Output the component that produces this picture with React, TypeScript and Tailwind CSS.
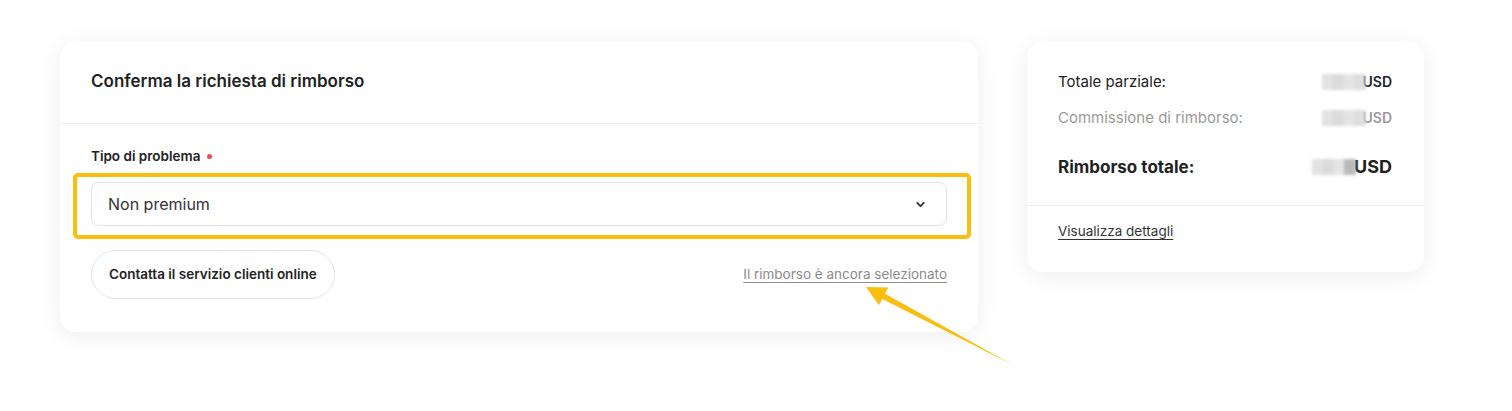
import { ChevronDown } from 'lucide-react';

function Blurred({ dark }: { dark?: boolean }) {
  return (
    <span className="flex items-center blur-[1.5px] opacity-80">
      <span className="w-[10px] h-[16px] bg-[#dcdcdc]" />
      <span className="w-[12px] h-[16px] bg-[#d3d3d3]" />
      <span className="w-[10px] h-[16px] bg-[#dedede]" />
      <span className={`w-[12px] h-[16px] ${dark ? 'bg-[#a9a9ab]' : 'bg-[#d6d6d6]'}`} />
    </span>
  );
}

function SummaryRow({ label, muted }: { label: string; muted?: boolean }) {
  return (
    <div className={`flex items-center justify-between text-[15px] leading-[20px] ${muted ? 'text-[#9a9a9a]' : 'text-[#222]'}`}>
      <span>{label}</span>
      <span className="flex items-center font-semibold text-[14px]">
        <Blurred />
        <span className="-ml-[4px]">USD</span>
      </span>
    </div>
  );
}

export default function App() {
  return (
    <div className="relative w-[1512px] h-[411px] bg-white font-['Inter',sans-serif]">
      <div className="flex items-start gap-[49px] pl-[60px] pt-[41px]">
        <div className="w-[918px] rounded-[16px] bg-white shadow-[0_4px_24px_rgba(0,0,0,0.07)]">
          <div className="h-[83px] flex items-center px-[31px] border-b border-[#eeeeee]">
            <h2 className="text-[17px] font-semibold text-[#222]">Conferma la richiesta di rimborso</h2>
          </div>
          <div className="px-[31px] pt-[24px] pb-[33px]">
            <div className="flex items-center gap-[7px] text-[13.5px] leading-[17px] font-semibold text-[#222]">
              Tipo di problema
              <span className="w-[5px] h-[5px] rounded-full bg-[#e94b4b]" />
            </div>
            <div className="relative mt-[17px]">
              <div className="h-[44px] flex items-center justify-between pl-[16px] pr-[19px] rounded-[8px] border border-[#e3e3e3] text-[16px] text-[#333]">
                <span>Non premium</span>
                <ChevronDown size={13} strokeWidth={3.5} className="text-[#333]" />
              </div>
              <div className="absolute -left-[18px] -right-[24px] -top-[9px] -bottom-[13px] border-[4px] border-[#fbbe0f] rounded-[5px] pointer-events-none" />
            </div>
            <div className="flex items-center justify-between mt-[24px]">
              <button className="h-[49px] px-[17px] rounded-full border border-[#e3e3e3] text-[13.5px] font-semibold text-[#222]">
                Contatta il servizio clienti online
              </button>
              <a className="text-[13.5px] text-[#8c8c8c] underline underline-offset-[3px]">Il rimborso è ancora selezionato</a>
            </div>
          </div>
        </div>

        <div className="w-[397px] rounded-[16px] bg-white shadow-[0_4px_24px_rgba(0,0,0,0.07)]">
          <div className="px-[31px] pt-[31px] pb-[26px] border-b border-[#eeeeee] pr-[32px]">
            <SummaryRow label="Totale parziale:" />
            <div className="mt-[16px]">
              <SummaryRow label="Commissione di rimborso:" muted />
            </div>
            <div className="mt-[27px] flex items-center justify-between text-[17px] leading-[24px] font-bold text-[#222]">
              <span>Rimborso totale:</span>
              <span className="flex items-center text-[18px]">
                <Blurred dark />
                <span className="-ml-[2px]">USD</span>
              </span>
            </div>
          </div>
          <div className="px-[31px] pt-[12px] pb-[30px]">
            <a className="text-[13.5px] leading-[18px] text-[#333] underline underline-offset-[3px]">Visualizza dettagli</a>
          </div>
        </div>
      </div>

      <svg className="absolute left-0 top-0 pointer-events-none" width="1512" height="411">
        <polygon
          points="866,287 888.4,287.6 885.1,293.8 1013,365 882.3,299 879,305.2"
          fill="#fbbe0f"
        />
      </svg>
    </div>
  );
}
